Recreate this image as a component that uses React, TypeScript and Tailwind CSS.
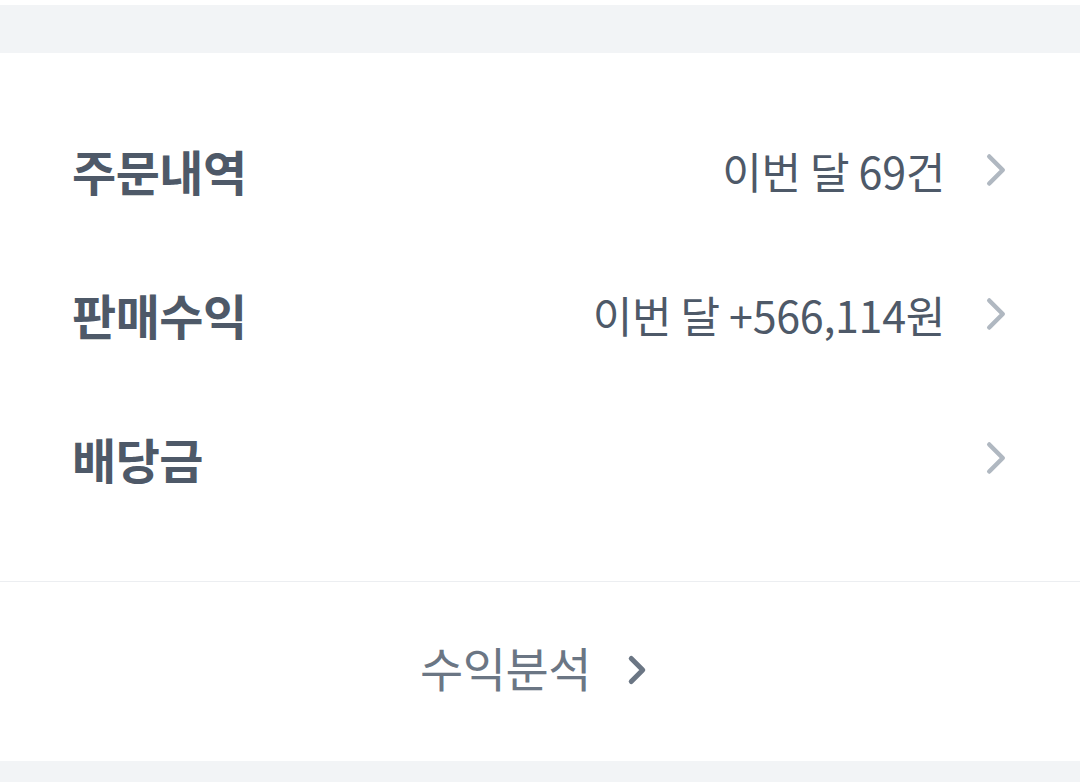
import { ChevronRight } from 'lucide-react';

const font = { fontFamily: '"Noto Sans CJK KR", "Noto Sans", sans-serif' };

interface RowProps {
    title: string;
    value?: string;
}

function Row({ title, value }: RowProps) {
    return (
        <div className="flex h-[144px] items-center justify-between pl-[72px] pr-[57px]">
            <span className="text-[48px] font-bold tracking-[-0.5px] text-[#4e5968]">{title}</span>
            <div className="flex items-center gap-[24px]">
                {value && <span className="text-[43px] tracking-[-0.3px] text-[#4e5968]">{value}</span>}
                <ChevronRight className="h-[54px] w-[54px] text-[#b0b8c1]" strokeWidth={2} />
            </div>
        </div>
    );
}

export default function App() {
    return (
        <div className="h-[782px] w-[1080px] overflow-hidden bg-white" style={font}>
            <div className="mt-[5px] h-[48px] bg-[#f2f4f6]" />
            <div className="pt-[45px] pb-[51px]">
                <Row title="주문내역" value="이번 달 69건" />
                <Row title="판매수익" value="이번 달 +566,114원" />
                <Row title="배당금" />
            </div>
            <div className="h-px bg-[#eceef1]" />
            <div className="flex h-[179px] items-center justify-center gap-[23px] pb-[8px]">
                <span className="text-[47px] tracking-[-0.5px] text-[#6b7684]">수익분석</span>
                <ChevronRight className="mt-[4px] h-[46px] w-[46px] text-[#6b7684]" strokeWidth={2.6} />
            </div>
            <div className="h-[21px] bg-[#f2f4f6]" />
        </div>
    );
}
